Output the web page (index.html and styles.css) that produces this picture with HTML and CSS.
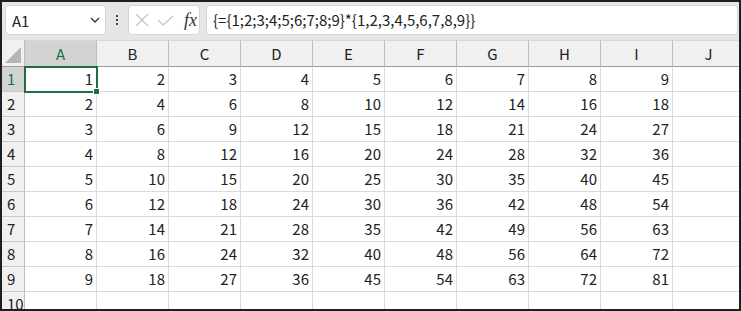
FILE: index.html
```html
<!DOCTYPE html>
<html lang="ja">

<head>
    <meta charset="UTF-8">
    <meta name="viewport" content="width=device-width, initial-scale=1.0">
    <title>配列の掛け算</title>
    <link rel="stylesheet" href="styles.css">
</head>

<body>
    <div class="app">
        <!-- 数式バー -->
        <div class="toolbar">
            <div class="namebox">
                <span>A1</span>
                <svg class="chevron" width="10" height="6" viewBox="0 0 10 6">
                    <path d="M1 1 L5 5 L9 1" fill="none" stroke="#333" stroke-width="1.3" />
                </svg>
            </div>
            <div class="dots"><i></i><i></i><i></i></div>
            <div class="fxbox">
                <svg width="14" height="14" viewBox="0 0 14 14">
                    <path d="M1 1 L13 13 M13 1 L1 13" stroke="#c4c4c4" stroke-width="1.2" />
                </svg>
                <svg width="17" height="11" viewBox="0 0 17 11">
                    <path d="M1 5 L6 10 L16 1" fill="none" stroke="#c4c4c4" stroke-width="1.2" />
                </svg>
                <span class="fx">fx</span>
            </div>
            <div class="formula">{=&#123;1;2;3;4;5;6;7;8;9}*{1,2,3,4,5,6,7,8,9}}</div>
        </div>

        <!-- シート -->
        <div class="sheet">
            <div class="corner"><span class="tri"></span></div>
            <div class="colhead active">A</div>
            <div class="colhead">B</div>
            <div class="colhead">C</div>
            <div class="colhead">D</div>
            <div class="colhead">E</div>
            <div class="colhead">F</div>
            <div class="colhead">G</div>
            <div class="colhead">H</div>
            <div class="colhead">I</div>
            <div class="colhead">J</div>

            <div class="rowhead active">1</div>
            <div class="cell selected">1</div><div class="cell">2</div><div class="cell">3</div><div class="cell">4</div><div class="cell">5</div><div class="cell">6</div><div class="cell">7</div><div class="cell">8</div><div class="cell">9</div><div class="cell"></div>

            <div class="rowhead">2</div>
            <div class="cell">2</div><div class="cell">4</div><div class="cell">6</div><div class="cell">8</div><div class="cell">10</div><div class="cell">12</div><div class="cell">14</div><div class="cell">16</div><div class="cell">18</div><div class="cell"></div>

            <div class="rowhead">3</div>
            <div class="cell">3</div><div class="cell">6</div><div class="cell">9</div><div class="cell">12</div><div class="cell">15</div><div class="cell">18</div><div class="cell">21</div><div class="cell">24</div><div class="cell">27</div><div class="cell"></div>

            <div class="rowhead">4</div>
            <div class="cell">4</div><div class="cell">8</div><div class="cell">12</div><div class="cell">16</div><div class="cell">20</div><div class="cell">24</div><div class="cell">28</div><div class="cell">32</div><div class="cell">36</div><div class="cell"></div>

            <div class="rowhead">5</div>
            <div class="cell">5</div><div class="cell">10</div><div class="cell">15</div><div class="cell">20</div><div class="cell">25</div><div class="cell">30</div><div class="cell">35</div><div class="cell">40</div><div class="cell">45</div><div class="cell"></div>

            <div class="rowhead">6</div>
            <div class="cell">6</div><div class="cell">12</div><div class="cell">18</div><div class="cell">24</div><div class="cell">30</div><div class="cell">36</div><div class="cell">42</div><div class="cell">48</div><div class="cell">54</div><div class="cell"></div>

            <div class="rowhead">7</div>
            <div class="cell">7</div><div class="cell">14</div><div class="cell">21</div><div class="cell">28</div><div class="cell">35</div><div class="cell">42</div><div class="cell">49</div><div class="cell">56</div><div class="cell">63</div><div class="cell"></div>

            <div class="rowhead">8</div>
            <div class="cell">8</div><div class="cell">16</div><div class="cell">24</div><div class="cell">32</div><div class="cell">40</div><div class="cell">48</div><div class="cell">56</div><div class="cell">64</div><div class="cell">72</div><div class="cell"></div>

            <div class="rowhead">9</div>
            <div class="cell">9</div><div class="cell">18</div><div class="cell">27</div><div class="cell">36</div><div class="cell">45</div><div class="cell">54</div><div class="cell">63</div><div class="cell">72</div><div class="cell">81</div><div class="cell"></div>

            <div class="rowhead">10</div>
            <div class="cell"></div><div class="cell"></div><div class="cell"></div><div class="cell"></div><div class="cell"></div><div class="cell"></div><div class="cell"></div><div class="cell"></div><div class="cell"></div><div class="cell"></div>
        </div>
    </div>
</body>

</html>
```

FILE: styles.css
```css
body {
    margin: 0;
    font-family: "Noto Sans CJK JP", "Noto Sans", sans-serif;
    color: #222;
}

.app {
    width: 741px;
    height: 311px;
    box-sizing: border-box;
    border: 2px solid #1e1e1e;
    background-color: #fff;
    overflow: hidden;
}

/* 数式バー */
.toolbar {
    display: flex;
    align-items: center;
    height: 38px;
    box-sizing: border-box;
    padding: 2px 1px 4px 3px;
    background-color: #e6e6e6;
}

.namebox,
.fxbox,
.formula {
    height: 30px;
    box-sizing: border-box;
    background-color: #fff;
    border: 1px solid #d6d6d6;
    border-radius: 4px;
}

.namebox {
    width: 101px;
    display: flex;
    align-items: center;
    justify-content: space-between;
    padding: 0 5px 0 6px;
    font-size: 15px;
}

.dots {
    width: 22px;
    display: flex;
    flex-direction: column;
    align-items: center;
    gap: 2px;
}

.dots i {
    width: 2px;
    height: 2px;
    background-color: #444;
}

.fxbox {
    width: 72px;
    display: flex;
    align-items: center;
    gap: 8px;
    padding-left: 6px;
}

.fx {
    font-family: "Liberation Serif", serif;
    font-style: italic;
    font-size: 18px;
    color: #333;
    margin-left: 2px;
}

.formula {
    flex: 1;
    margin-left: 6px;
    padding-left: 6px;
    font-size: 15px;
    line-height: 28px;
    white-space: nowrap;
}

/* シート */
.sheet {
    display: grid;
    grid-template-columns: 23px repeat(10, 72px);
    grid-template-rows: 27px;
    grid-auto-rows: 25px;
    font-size: 15px;
}

.corner,
.colhead,
.rowhead {
    background-color: #f0f0f0;
    box-sizing: border-box;
}

.corner {
    border-right: 1px solid #bdbdbd;
    border-bottom: 1px solid #9e9e9e;
    display: flex;
    justify-content: flex-end;
    align-items: flex-end;
    padding: 0 3px 3px 0;
}

.tri {
    width: 0;
    height: 0;
    border-left: 16px solid transparent;
    border-bottom: 16px solid #b5b5b5;
}

.colhead {
    text-align: center;
    line-height: 25px;
    border-top: 1px solid #d8d8d8;
    border-right: 1px solid #bdbdbd;
    border-bottom: 1px solid #9e9e9e;
}

.rowhead {
    padding-left: 5px;
    line-height: 24px;
    border-right: 1px solid #bdbdbd;
    border-bottom: 1px solid #c8c8c8;
}

.colhead.active,
.rowhead.active {
    background-color: #d3d3d3;
    color: #1f6b42;
}

.cell {
    box-sizing: border-box;
    text-align: right;
    padding-right: 3px;
    line-height: 24px;
    border-right: 1px solid #dadada;
    border-bottom: 1px solid #dadada;
}

.cell.selected {
    position: relative;
    z-index: 1;
    outline: 2px solid #1e6e42;
    outline-offset: -1px;
}

.cell.selected::after {
    content: "";
    position: absolute;
    right: -4px;
    bottom: -4px;
    width: 5px;
    height: 5px;
    background-color: #1e6e42;
    border: 1px solid #fff;
}
```
